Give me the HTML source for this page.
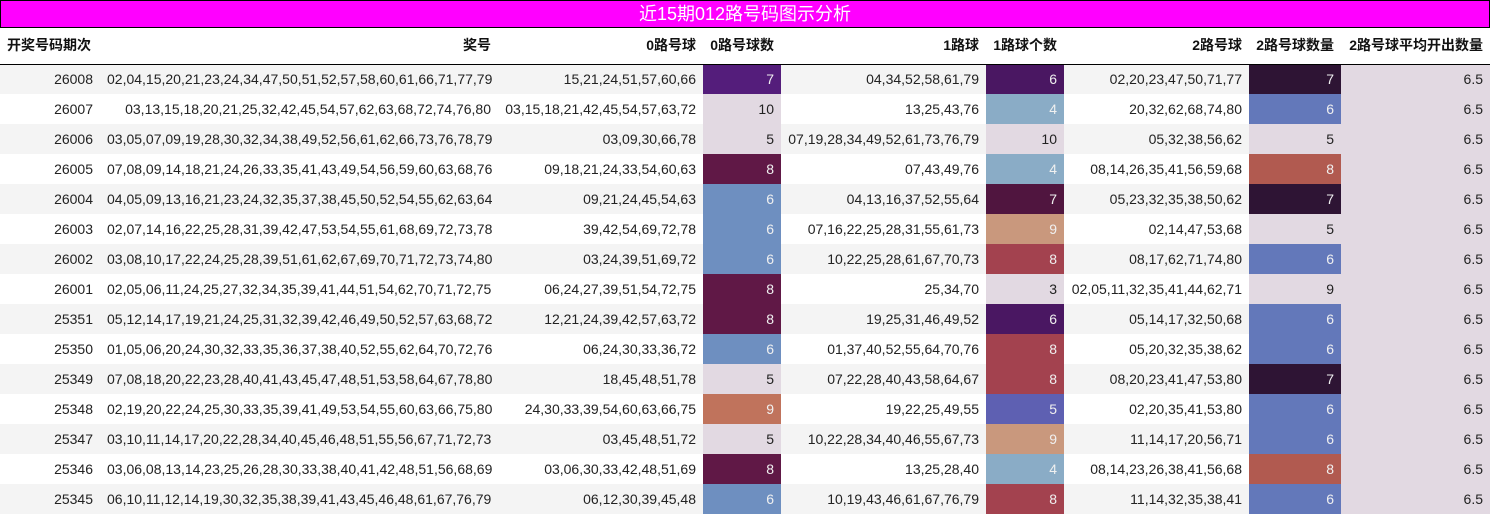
<!DOCTYPE html>
<html><head><meta charset="utf-8"><style>
*{margin:0;padding:0;box-sizing:border-box}
body{width:1490px;height:515px;background:#fff;font-family:"Liberation Sans","Noto Sans CJK SC",sans-serif;font-size:14px;color:#222;overflow:hidden}
.title{height:28px;background:#ff00ff;border:1px solid #000;color:#fff;text-align:center;font-size:18px;line-height:26px}
table{border-collapse:collapse;table-layout:fixed;width:1490px}
th{height:36px;border-bottom:1px solid #000;font-weight:bold;text-align:right;padding:0 7px 1px;white-space:nowrap;font-size:14px;color:#111}
th:first-child{text-align:left}
td{height:30px;text-align:right;padding:0 7px;white-space:nowrap}
tr:nth-child(odd) td{background:#f4f4f4}
tr:nth-child(even) td{background:#fff}
td.c{color:#f0f0f0}
td.l{color:#222}
tr td.a{background:#e2d9e2}
</style></head><body>
<div class="title">近15期012路号码图示分析</div>
<table>
<colgroup><col style="width:100px"><col style="width:398px"><col style="width:205px"><col style="width:78px"><col style="width:205px"><col style="width:78px"><col style="width:185px"><col style="width:92px"><col style="width:149px"></colgroup>
<thead><tr><th>开奖号码期次</th><th>奖号</th><th>0路号球</th><th>0路号球数</th><th>1路球</th><th>1路球个数</th><th>2路号球</th><th>2路号球数量</th><th>2路号球平均开出数量</th></tr></thead>
<tbody>
<tr><td>26008</td><td>02,04,15,20,21,23,24,34,47,50,51,52,57,58,60,61,66,71,77,79</td><td>15,21,24,51,57,60,66</td><td class="c" style="background:#541d7b">7</td><td>04,34,52,58,61,79</td><td class="c" style="background:#4a1762">6</td><td>02,20,23,47,50,71,77</td><td class="c" style="background:#2e1434">7</td><td class="a">6.5</td></tr>
<tr><td>26007</td><td>03,13,15,18,20,21,25,32,42,45,54,57,62,63,68,72,74,76,80</td><td>03,15,18,21,42,45,54,57,63,72</td><td class="l" style="background:#e2d9e2">10</td><td>13,25,43,76</td><td class="c" style="background:#8aacc6">4</td><td>20,32,62,68,74,80</td><td class="c" style="background:#6378ba">6</td><td class="a">6.5</td></tr>
<tr><td>26006</td><td>03,05,07,09,19,28,30,32,34,38,49,52,56,61,62,66,73,76,78,79</td><td>03,09,30,66,78</td><td class="l" style="background:#e2d9e2">5</td><td>07,19,28,34,49,52,61,73,76,79</td><td class="l" style="background:#e2d9e2">10</td><td>05,32,38,56,62</td><td class="l" style="background:#e2d9e2">5</td><td class="a">6.5</td></tr>
<tr><td>26005</td><td>07,08,09,14,18,21,24,26,33,35,41,43,49,54,56,59,60,63,68,76</td><td>09,18,21,24,33,54,60,63</td><td class="c" style="background:#601846">8</td><td>07,43,49,76</td><td class="c" style="background:#8aacc6">4</td><td>08,14,26,35,41,56,59,68</td><td class="c" style="background:#b15a50">8</td><td class="a">6.5</td></tr>
<tr><td>26004</td><td>04,05,09,13,16,21,23,24,32,35,37,38,45,50,52,54,55,62,63,64</td><td>09,21,24,45,54,63</td><td class="c" style="background:#6e8fc0">6</td><td>04,13,16,37,52,55,64</td><td class="c" style="background:#50153f">7</td><td>05,23,32,35,38,50,62</td><td class="c" style="background:#2e1434">7</td><td class="a">6.5</td></tr>
<tr><td>26003</td><td>02,07,14,16,22,25,28,31,39,42,47,53,54,55,61,68,69,72,73,78</td><td>39,42,54,69,72,78</td><td class="c" style="background:#6e8fc0">6</td><td>07,16,22,25,28,31,55,61,73</td><td class="c" style="background:#c9987d">9</td><td>02,14,47,53,68</td><td class="l" style="background:#e2d9e2">5</td><td class="a">6.5</td></tr>
<tr><td>26002</td><td>03,08,10,17,22,24,25,28,39,51,61,62,67,69,70,71,72,73,74,80</td><td>03,24,39,51,69,72</td><td class="c" style="background:#6e8fc0">6</td><td>10,22,25,28,61,67,70,73</td><td class="c" style="background:#a3424f">8</td><td>08,17,62,71,74,80</td><td class="c" style="background:#6378ba">6</td><td class="a">6.5</td></tr>
<tr><td>26001</td><td>02,05,06,11,24,25,27,32,34,35,39,41,44,51,54,62,70,71,72,75</td><td>06,24,27,39,51,54,72,75</td><td class="c" style="background:#601846">8</td><td>25,34,70</td><td class="l" style="background:#e2d9e2">3</td><td>02,05,11,32,35,41,44,62,71</td><td class="l" style="background:#e2d9e2">9</td><td class="a">6.5</td></tr>
<tr><td>25351</td><td>05,12,14,17,19,21,24,25,31,32,39,42,46,49,50,52,57,63,68,72</td><td>12,21,24,39,42,57,63,72</td><td class="c" style="background:#601846">8</td><td>19,25,31,46,49,52</td><td class="c" style="background:#4a1762">6</td><td>05,14,17,32,50,68</td><td class="c" style="background:#6378ba">6</td><td class="a">6.5</td></tr>
<tr><td>25350</td><td>01,05,06,20,24,30,32,33,35,36,37,38,40,52,55,62,64,70,72,76</td><td>06,24,30,33,36,72</td><td class="c" style="background:#6e8fc0">6</td><td>01,37,40,52,55,64,70,76</td><td class="c" style="background:#a3424f">8</td><td>05,20,32,35,38,62</td><td class="c" style="background:#6378ba">6</td><td class="a">6.5</td></tr>
<tr><td>25349</td><td>07,08,18,20,22,23,28,40,41,43,45,47,48,51,53,58,64,67,78,80</td><td>18,45,48,51,78</td><td class="l" style="background:#e2d9e2">5</td><td>07,22,28,40,43,58,64,67</td><td class="c" style="background:#a3424f">8</td><td>08,20,23,41,47,53,80</td><td class="c" style="background:#2e1434">7</td><td class="a">6.5</td></tr>
<tr><td>25348</td><td>02,19,20,22,24,25,30,33,35,39,41,49,53,54,55,60,63,66,75,80</td><td>24,30,33,39,54,60,63,66,75</td><td class="c" style="background:#c0735c">9</td><td>19,22,25,49,55</td><td class="c" style="background:#5e60b2">5</td><td>02,20,35,41,53,80</td><td class="c" style="background:#6378ba">6</td><td class="a">6.5</td></tr>
<tr><td>25347</td><td>03,10,11,14,17,20,22,28,34,40,45,46,48,51,55,56,67,71,72,73</td><td>03,45,48,51,72</td><td class="l" style="background:#e2d9e2">5</td><td>10,22,28,34,40,46,55,67,73</td><td class="c" style="background:#c9987d">9</td><td>11,14,17,20,56,71</td><td class="c" style="background:#6378ba">6</td><td class="a">6.5</td></tr>
<tr><td>25346</td><td>03,06,08,13,14,23,25,26,28,30,33,38,40,41,42,48,51,56,68,69</td><td>03,06,30,33,42,48,51,69</td><td class="c" style="background:#601846">8</td><td>13,25,28,40</td><td class="c" style="background:#8aacc6">4</td><td>08,14,23,26,38,41,56,68</td><td class="c" style="background:#b15a50">8</td><td class="a">6.5</td></tr>
<tr><td>25345</td><td>06,10,11,12,14,19,30,32,35,38,39,41,43,45,46,48,61,67,76,79</td><td>06,12,30,39,45,48</td><td class="c" style="background:#6e8fc0">6</td><td>10,19,43,46,61,67,76,79</td><td class="c" style="background:#a3424f">8</td><td>11,14,32,35,38,41</td><td class="c" style="background:#6378ba">6</td><td class="a">6.5</td></tr>
</tbody></table>
</body></html>
